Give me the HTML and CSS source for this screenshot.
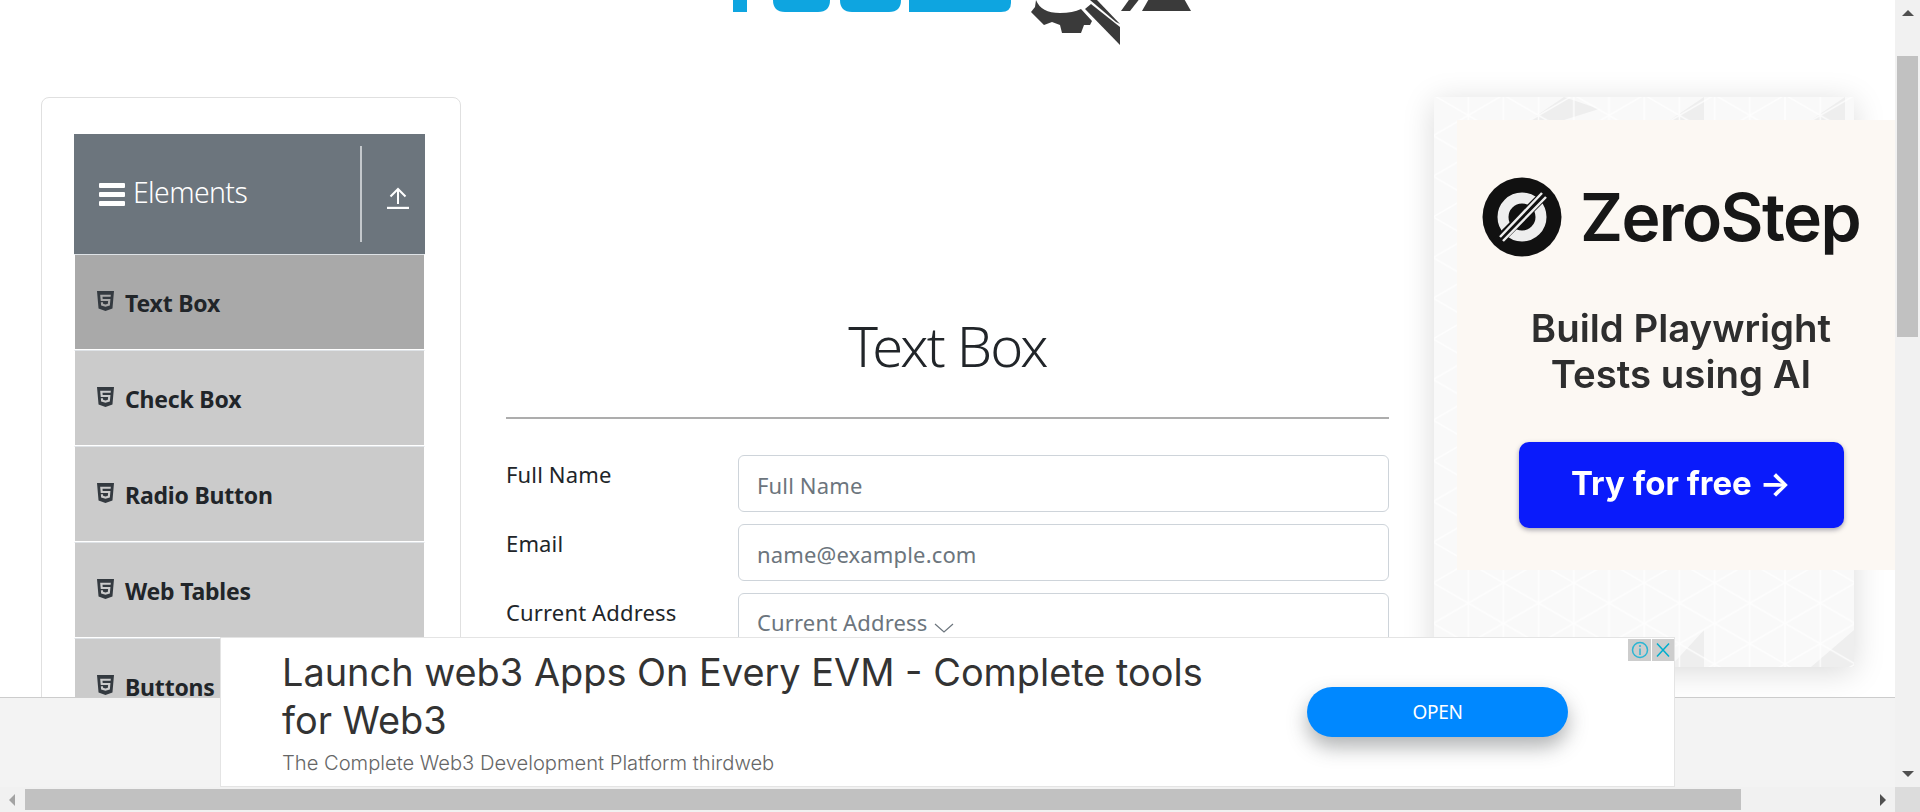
FILE: index.html
```html
<!DOCTYPE html>
<html lang="en">
<head>
    <meta charset="UTF-8">
    <title>Text Box | Tools QA</title>
    <link rel="stylesheet" href="styles.css">
</head>
<body>
<div class="screen">
    <div class="page">
        <!-- logo, scrolled mostly out of view -->
        <header class="logo-row">
            <svg class="logo" width="480" height="46" viewBox="720 0 480 46">
                <g fill="#0ea5e0">
                    <rect x="733" y="-10" width="14" height="22"/>
                    <path d="M773 -10H830V0Q830 12 818 12H785Q773 12 773 0Z"/>
                    <path d="M840 -10H901V0Q901 12 889 12H852Q840 12 840 0Z"/>
                    <path d="M909 -10H1011V3Q1011 12 1001 12H909Z"/>
                </g>
                <g fill="#3a3a3a">
                    <path d="M1036 0Q1041 13 1060 13Q1073 13 1081 9L1092 21L1090 25L1084 25L1081 33L1062 33L1060 25L1052 22L1044 25L1031 12L1035 7Z"/>
                    <path d="M1085 9L1091 4L1120 27V45Z"/>
                    <path d="M1090 0H1097L1120 24L1116 22Z"/>
                    <path d="M1121 11L1131 -3H1141L1130 11Z"/>
                    <path d="M1142 11L1150 -3H1183L1191 11Z"/>
                </g>
            </svg>
        </header>

        <div class="content">
            <aside class="sidebar">
                <div class="menu-head">
                    <div class="menu-title">
                        <span class="burger"><i></i><i></i><i></i></span>
                        <span>Elements</span>
                    </div>
                    <div class="menu-toggle">
                        <svg width="22" height="22" viewBox="0 0 22 22" fill="none" stroke="#fff" stroke-width="2">
                            <path d="M11 17V2M3.5 9.5L11 2L18.500 9.5"/>
                            <path d="M0 21H22" stroke-width="2.400"/>
                        </svg>
                    </div>
                </div>
                <ul class="menu">
                    <li class="menu-item active"><svg class="h5" viewBox="0 32 384 448"><path d="M0 32l34.9 395.8L191.5 480l157.6-52.2L384 32H0zm308.2 127.9H124.4l4.1 49.4h175.6l-13.6 148.4-97.9 27v.3h-1.1l-98.7-27.3-6-75.8h47.7L138 320l53.5 14.5 53.7-14.5 6-62.2H84.3L71.5 112.2h241.1l-4.4 47.7z"/></svg>Text Box</li>
                    <li class="menu-item"><svg class="h5" viewBox="0 32 384 448"><path d="M0 32l34.9 395.8L191.5 480l157.6-52.2L384 32H0zm308.2 127.9H124.4l4.1 49.4h175.6l-13.6 148.4-97.9 27v.3h-1.1l-98.7-27.3-6-75.8h47.7L138 320l53.5 14.5 53.7-14.5 6-62.2H84.3L71.5 112.2h241.1l-4.4 47.7z"/></svg>Check Box</li>
                    <li class="menu-item"><svg class="h5" viewBox="0 32 384 448"><path d="M0 32l34.9 395.8L191.5 480l157.6-52.2L384 32H0zm308.2 127.9H124.4l4.1 49.4h175.6l-13.6 148.4-97.9 27v.3h-1.1l-98.7-27.3-6-75.8h47.7L138 320l53.5 14.5 53.7-14.5 6-62.2H84.3L71.5 112.2h241.1l-4.4 47.7z"/></svg>Radio Button</li>
                    <li class="menu-item"><svg class="h5" viewBox="0 32 384 448"><path d="M0 32l34.9 395.8L191.5 480l157.6-52.2L384 32H0zm308.2 127.9H124.4l4.1 49.4h175.6l-13.6 148.4-97.9 27v.3h-1.1l-98.7-27.3-6-75.8h47.7L138 320l53.5 14.5 53.7-14.5 6-62.2H84.3L71.5 112.2h241.1l-4.4 47.7z"/></svg>Web Tables</li>
                    <li class="menu-item"><svg class="h5" viewBox="0 32 384 448"><path d="M0 32l34.9 395.8L191.5 480l157.6-52.2L384 32H0zm308.2 127.9H124.4l4.1 49.4h175.6l-13.6 148.4-97.9 27v.3h-1.1l-98.7-27.3-6-75.8h47.7L138 320l53.5 14.5 53.7-14.5 6-62.2H84.3L71.5 112.2h241.1l-4.4 47.7z"/></svg>Buttons</li>
                </ul>
            </aside>

            <main class="main">
                <h1>Text Box</h1>
                <hr class="rule">
                <form class="form">
                    <label class="form-label">Full Name</label>
                    <input class="field" type="text" placeholder="Full Name">
                    <label class="form-label">Email</label>
                    <input class="field" type="text" placeholder="name@example.com">
                    <label class="form-label">Current Address</label>
                    <div class="field field-area">
                        <span>Current Address</span>
                        <svg width="20" height="10" viewBox="0 0 20 10" fill="none" stroke="#6c757d" stroke-width="1.2"><path d="M1 1L10 9L19 1"/></svg>
                    </div>
                </form>
            </main>

            <section class="side-ad">
                <svg class="ad-pattern" width="420" height="570">
                    <defs>
                        <pattern id="tri" width="70.4" height="81.300" patternUnits="userSpaceOnUse" patternTransform="translate(-1 -2)">
                            <path d="M0 0V81.300M35.200 0V81.300M70.400 0V81.300M0 0L70.400 40.650M0 40.650L70.400 81.300M0 40.650L70.400 0M0 81.300L70.400 40.650M0 -40.650L70.400 0M0 81.300L70.400 121.950" stroke="#fff" stroke-width="1.500" stroke-opacity="0.8" fill="none"/>
                        </pattern>
                    </defs>
                    <rect width="420" height="570" fill="#f9f9f9"/>
                    <path d="M96 23L130 0V23ZM130 0L165 12L130 23ZM236 23L270 0V23ZM377 23L411 0V23ZM236 570L270 533V570ZM377 570L420 533V570Z" fill="#eeeeee"/>
                    <rect width="420" height="570" fill="url(#tri)"/>
                </svg>
                <div class="ad-panel">
                    <div class="brand">
                        <svg width="80" height="80" viewBox="-40 -40 80 80">
                            <circle r="39.500" fill="#111"/>
                            <circle r="19" fill="none" stroke="#eee" stroke-width="11"/>
                            <path d="M-26 26L26 -26" stroke="#111" stroke-width="10"/>
                            <path d="M-22 20L20 -24M-19 24L24 -20" stroke="#eee" stroke-width="2.500"/>
                        </svg>
                        <span>ZeroStep</span>
                    </div>
                    <p class="ad-copy">Build Playwright<br>Tests using AI</p>
                    <div class="ad-cta">Try for free →</div>
                </div>
            </section>
        </div>

        <!-- sticky ad strip at the bottom of the page -->
        <div class="sticky">
            <div class="banner">
                <div class="banner-text">
                    <div class="banner-title">Launch web3 Apps On Every EVM - Complete tools for Web3</div>
                    <div class="banner-sub">The Complete Web3 Development Platform thirdweb</div>
                </div>
                <div class="open-btn">OPEN</div>
                <div class="ad-marks">
                    <span class="ad-mark ad-mark-info">
                        <svg width="18" height="18" viewBox="0 0 18 18" fill="none" stroke="#2bb5d3" stroke-width="1.500"><circle cx="9" cy="9" r="7.500"/><path d="M9 7.500V14M9 4V6"/></svg>
                    </span>
                    <span class="ad-mark">
                        <svg width="16" height="16" viewBox="0 0 16 16" fill="none" stroke="#00aecd" stroke-width="1.500"><path d="M2 1.500L14 14.500M14 1.500L2 14.500"/></svg>
                    </span>
                </div>
            </div>
        </div>
    </div>

    <div class="vbar">
        <span class="arrow arrow-up"></span>
        <span class="vthumb"></span>
        <span class="arrow arrow-down"></span>
    </div>
    <div class="hbar">
        <span class="arrow arrow-left"></span>
        <span class="hthumb"></span>
        <span class="arrow arrow-right"></span>
    </div>
    <div class="corner"></div>
</div>
</body>
</html>
```

FILE: styles.css
```css
* {
    box-sizing: border-box;
}
html, body {
    margin: 0;
    padding: 0;
    height: 812px;
    overflow: hidden;
    background-color: #fff;
    font-family: "Noto Sans", "Open Sans", sans-serif;
    color: #212529;
}
.screen {
    display: grid;
    grid-template-columns: 1895px 25px;
    grid-template-rows: 787px 25px;
    width: 1920px;
    height: 812px;
}

/* page */
.page {
    position: relative;
    overflow: hidden;
    background-color: #fff;
}
.logo-row {
    height: 97px;
    padding-left: 720px;
}
.logo {
    display: block;
}
.content {
    display: flex;
    align-items: flex-start;
    padding-left: 41px;
}

/* sidebar */
.sidebar {
    flex: none;
    width: 420px;
    height: 800px;
    padding: 36px 35px 0 32px;
    border: 1px solid #e0e0e0;
    border-radius: 8px;
}
.menu-head {
    display: flex;
    height: 120px;
    background-color: #6c757d;
    color: #fff;
}
.menu-title {
    display: flex;
    align-items: center;
    gap: 8px;
    width: 288px;
    margin: 12px 0;
    padding: 0 0 4px 25px;
    border-right: 2px solid #c4c8cc;
    font-size: 28.4px;
    font-weight: 300;
    letter-spacing: -0.6px;
}
.burger {
    display: flex;
    flex-direction: column;
    gap: 4px;
    width: 26px;
    margin-top: 5px;
}
.burger i {
    display: block;
    height: 5px;
    background-color: #fff;
    border-radius: 1px;
}
.menu-toggle {
    padding: 53px 0 0 25px;
}
.menu {
    list-style-type: none;
    margin: 0;
    padding: 0;
}
.menu-item {
    display: flex;
    align-items: center;
    gap: 11px;
    height: 96px;
    padding: 2px 0 0 22px;
    border: 1px solid #fff;
    border-top-color: #dee2e6;
    background-color: #cbcbcb;
    font-size: 23px;
    font-weight: 700;
    letter-spacing: -0.2px;
}
.menu-item.active {
    background-color: #a9a9a9;
}
.h5 {
    flex: none;
    width: 17px;
    height: 20px;
    margin-top: -4px;
    fill: #343a40;
}

/* form */
.main {
    flex: none;
    width: 883px;
    margin: 0 45px 0 45px;
    padding-top: 206px;
}
h1 {
    margin: 0;
    height: 84px;
    line-height: 84px;
    text-align: center;
    font-size: 56px;
    font-weight: 300;
    letter-spacing: -1.8px;
}
.rule {
    margin: 30px 0 36px;
    border: 0;
    border-top: 2px solid #adadad;
}
.form {
    display: grid;
    grid-template-columns: 232px 651px;
    row-gap: 12px;
}
.form-label {
    padding-top: 4px;
    font-size: 22px;
    letter-spacing: 0.15px;
}
.field {
    display: flex;
    align-items: flex-start;
    gap: 7px;
    width: 651px;
    height: 57px;
    padding: 2px 18px 0;
    border: 1px solid #ced4da;
    border-radius: 6px;
    background-color: #fff;
    font-family: inherit;
    font-size: 22px;
    letter-spacing: 0.15px;
    color: #6c757d;
}
.field::placeholder {
    color: #6c757d;
    opacity: 1;
}
.field-area {
    height: 130px;
    padding-top: 13px;
}
.field-area svg {
    margin-top: 16px;
}

/* right ad */
.side-ad {
    position: relative;
    flex: none;
    width: 420px;
    height: 570px;
    padding: 23px 0 0 23px;
    box-shadow: 0 5px 30px rgba(0, 0, 0, 0.15);
}
.ad-pattern {
    position: absolute;
    top: 0;
    left: 0;
    filter: blur(0.6px);
}
.ad-panel {
    position: relative;
    display: flex;
    flex-direction: column;
    align-items: center;
    width: 438px;
    height: 450px;
    padding: 57px 0 0 10px;
    background-color: #fcf8f3;
}
.brand {
    display: flex;
    align-items: center;
    gap: 18px;
    margin-left: -20px;
    font-family: Inter, sans-serif;
    font-size: 66px;
    font-weight: 600;
    letter-spacing: -1.6px;
    color: #171717;
    filter: blur(0.5px);
}
.ad-copy {
    margin: 48px 0 0;
    text-align: center;
    font-family: Inter, sans-serif;
    font-size: 38.4px;
    font-weight: 600;
    line-height: 46px;
    color: #2e2e2e;
    filter: blur(0.5px);
}
.ad-cta {
    display: flex;
    align-items: center;
    justify-content: center;
    width: 325px;
    height: 86px;
    margin-top: 45px;
    padding-bottom: 4px;
    background-color: #0a1bfb;
    border-radius: 10px;
    box-shadow: 0 2px 5px rgba(0, 0, 40, 0.35);
    font-family: Inter, sans-serif;
    font-size: 33px;
    font-weight: 700;
    color: #fff;
    filter: blur(0.5px);
}

/* bottom ad */
.sticky {
    position: absolute;
    left: 0;
    right: 0;
    bottom: 0;
    height: 90px;
    background-color: #f3f3f3;
    border-top: 1px solid #ccc;
}
.banner {
    position: relative;
    display: flex;
    align-items: center;
    width: 1455px;
    height: 150px;
    margin: -61px 0 0 220px;
    padding-left: 61px;
    background-color: #fff;
    border: 1px solid #e4e4e4;
}
.banner-text {
    flex: none;
    width: 940px;
}
.banner-title {
    font-family: Inter, sans-serif;
    font-size: 37.9px;
    line-height: 48px;
    color: #333;
}
.banner-sub {
    margin-top: 6px;
    font-family: Inter, sans-serif;
    font-size: 20.15px;
    font-weight: 300;
    line-height: 26px;
    color: #666;
}
.open-btn {
    display: flex;
    align-items: center;
    justify-content: center;
    width: 261px;
    height: 50px;
    margin: 0 0 0 85px;
    background-color: #0088ff;
    border-radius: 25px;
    box-shadow: 0 10px 20px rgba(60, 64, 67, 0.4);
    font-size: 19px;
    letter-spacing: -0.3px;
    color: #fff;
}
.ad-marks {
    position: absolute;
    top: 1px;
    right: 0;
    display: flex;
    gap: 1px;
}
.ad-mark {
    display: flex;
    align-items: center;
    justify-content: center;
    width: 22px;
    height: 22px;
    background-color: #cdcdcd;
}
.ad-mark-info {
    width: 23px;
}

/* scrollbars */
.vbar {
    display: flex;
    flex-direction: column;
    align-items: center;
    padding: 10px 0 10px;
    background-color: #f1f1f1;
    position: relative;
}
.vthumb {
    width: 21px;
    height: 281px;
    margin-top: 40px;
    background-color: #c1c1c1;
}
.hbar {
    display: flex;
    align-items: center;
    background-color: #f1f1f1;
}
.hthumb {
    width: 1716px;
    height: 21px;
    margin-left: 10px;
    background-color: #c1c1c1;
}
.corner {
    background-color: #dcdcdc;
}
.arrow {
    flex: none;
    width: 0;
    height: 0;
    border-style: solid;
    border-color: transparent;
}
.arrow-up {
    border-width: 0 6px 6px;
    border-bottom-color: #505050;
}
.arrow-down {
    margin-top: auto;
    border-width: 6px 6px 0;
    border-top-color: #505050;
}
.arrow-left {
    margin-left: 9px;
    border-width: 6px 6px 6px 0;
    border-right-color: #a3a3a3;
}
.arrow-right {
    margin-left: auto;
    margin-right: 9px;
    border-width: 6px 0 6px 6px;
    border-left-color: #505050;
}
```
